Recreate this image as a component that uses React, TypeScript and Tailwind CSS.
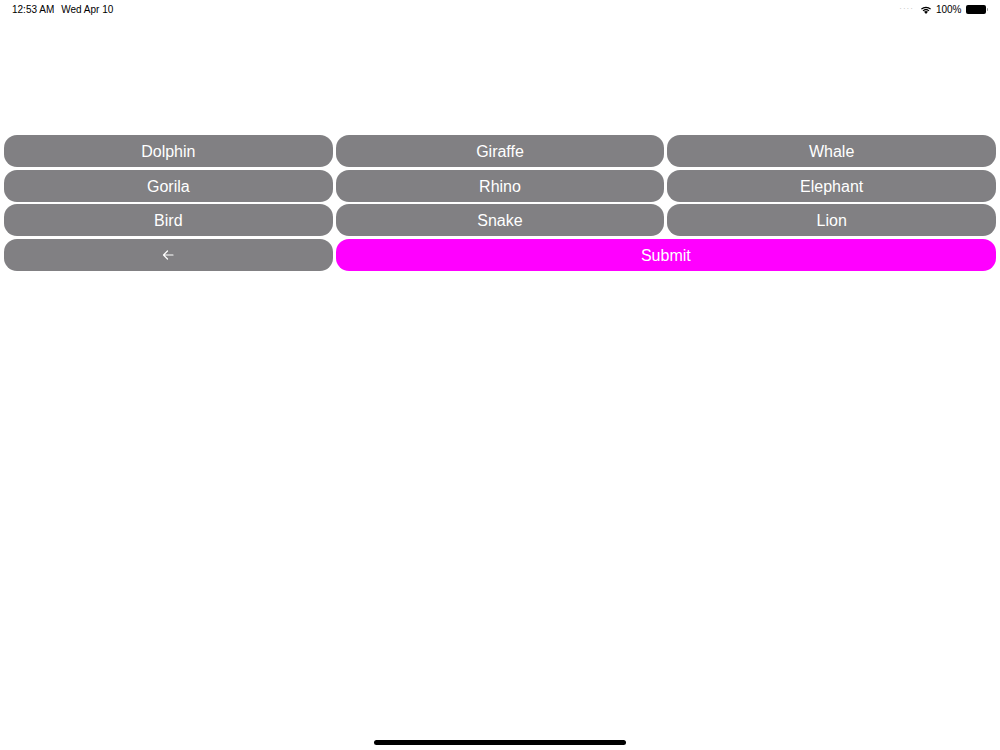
import React from 'react';

const ANIMALS = ['Dolphin', 'Giraffe', 'Whale', 'Gorila', 'Rhino', 'Elephant', 'Bird', 'Snake', 'Lion'];

function StatusBar() {
  return (
    <div className="flex items-center justify-between h-[18px] px-[12px] text-[10px] text-black font-['Liberation_Sans',sans-serif]">
      <div className="flex gap-[7px] font-medium">
        <span>12:53 AM</span>
        <span>Wed Apr 10</span>
      </div>
      <div className="flex items-center gap-[4px] font-medium">
        <span className="text-[#b8b8b8] text-[8px] tracking-[1px] mr-[2px]">····</span>
        <svg width="12" height="9" viewBox="0 0 12 9">
          <path d="M6 9 L4 6.8 A3 3 0 0 1 8 6.8 Z" fill="#000" />
          <path d="M2.6 5.4 A5 5 0 0 1 9.4 5.4 L8.5 6.3 A3.7 3.7 0 0 0 3.5 6.3 Z" fill="#000" />
          <path d="M0.9 3.7 A7.5 7.5 0 0 1 11.1 3.7 L10.2 4.6 A6.2 6.2 0 0 0 1.8 4.6 Z" fill="#000" />
        </svg>
        <span>100%</span>
        <div className="flex items-center">
          <div className="w-[20px] h-[9px] rounded-[2px] bg-black" />
          <div className="w-[1.5px] h-[3px] bg-[#999] rounded-r-sm ml-[1px]" />
        </div>
      </div>
    </div>
  );
}

export default function App() {
  return (
    <div className="relative w-[1000px] h-[750px] bg-white overflow-hidden font-['Liberation_Sans',sans-serif]">
      <StatusBar />
      <div className="px-[4px] pt-[117px]">
        <div className="grid grid-cols-3 gap-x-[3px] gap-y-[2.5px]">
          {ANIMALS.map((a) => (
            <button
              key={a}
              className="h-[32px] pt-[2px] rounded-[13px] bg-[#818083] text-white text-[16px] flex items-center justify-center"
            >
              {a}
            </button>
          ))}
          <button className="h-[32px] pt-[1px] rounded-[13px] bg-[#818083] text-white text-[16px] flex items-center justify-center">
            <svg width="12" height="10" viewBox="0 0 12 10" fill="none" stroke="#fff" strokeWidth="1.2" strokeLinecap="round" strokeLinejoin="round">
              <path d="M11 5 H1.5 M5.5 1 L1.5 5 L5.5 9" />
            </svg>
          </button>
          <button className="col-span-2 h-[32px] pt-[2px] rounded-[13px] bg-[#ff00ff] text-white text-[16px] flex items-center justify-center">
            Submit
          </button>
        </div>
      </div>
      <div className="absolute left-[374px] top-[740px] w-[252px] h-[5px] rounded-full bg-black" />
    </div>
  );
}
